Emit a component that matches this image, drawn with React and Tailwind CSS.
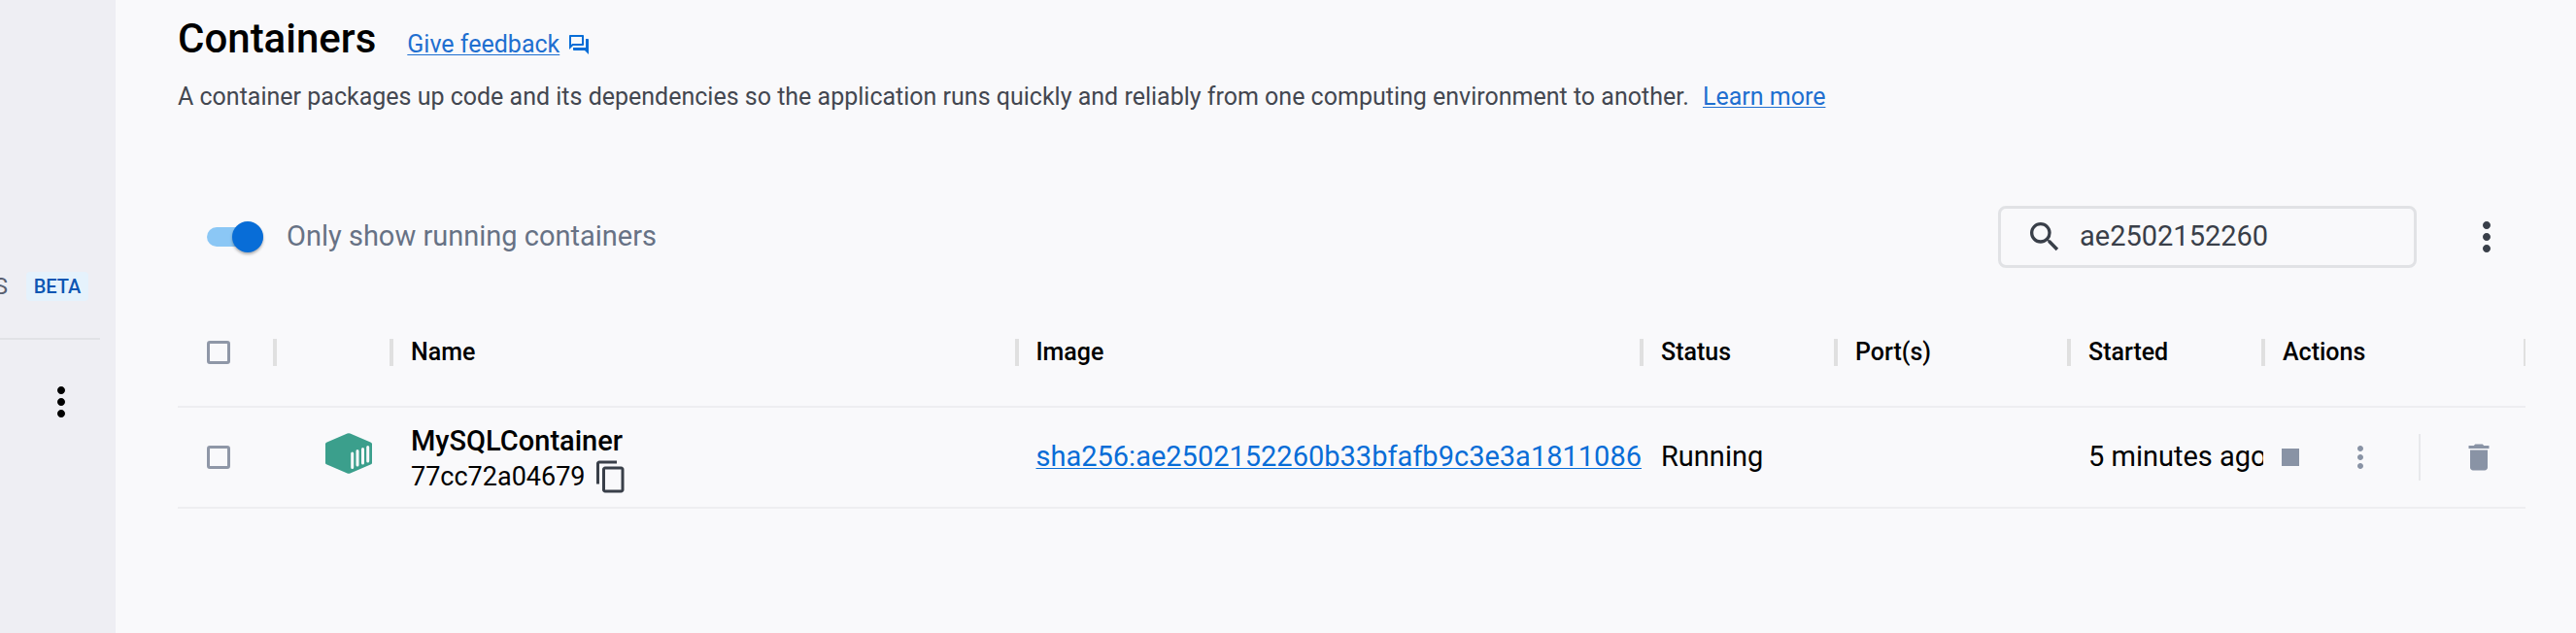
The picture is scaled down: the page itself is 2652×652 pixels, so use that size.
import { MdOutlineQuestionAnswer, MdMoreVert, MdSearch, MdContentCopy, MdStop, MdDelete } from 'react-icons/md';

const separator =
  'before:absolute before:right-[-2px] before:top-1/2 before:h-7 before:w-1 before:-translate-y-1/2 before:bg-[#e0e0e0]';
const lastSeparator =
  'before:absolute before:right-0 before:top-1/2 before:h-7 before:w-0.5 before:-translate-y-1/2 before:bg-[#e0e0e0]';

function HeaderCell({ children, label, last }) {
  return (
    <th aria-label={label} className={`relative px-5 text-left font-medium ${last ? lastSeparator : separator}`}>
      {children}
    </th>
  );
}

function Checkbox({ label }) {
  return (
    <input
      type="checkbox"
      aria-label={label}
      className="block size-6 appearance-none rounded-[3px] border-[3px] border-[#8f97a7] checked:bg-[#086dd7]"
    />
  );
}

function ContainerIcon() {
  return (
    <svg viewBox="0 0 48 42" className="mb-2 ml-[52px] h-[42px] w-12" aria-hidden="true">
      <path d="M22.5.5q1.500-.7 3 0l21.500 9.300q1 .5 1 1.500v19.400q0 1-1 1.500l-21.500 9.300q-1.500.7-3 0l-21.500-9.300q-1-.5-1-1.500v-19.400q0-1 1-1.500z" fill="#3b9f8c" />
      <path d="M27.700 21v14.500M33 18.500v14.500M38.500 16.500v14.500M43.700 14.500v14.500" stroke="#f9f9fb" strokeWidth="3" strokeLinecap="round" />
    </svg>
  );
}

function Sidebar() {
  return (
    <aside className="w-[119px] shrink-0 overflow-hidden bg-[#eeeef3] pt-[280px]">
      <div className="flex h-[30px] items-center gap-[19px]">
        <span className="flex w-2 justify-end text-2xl text-[#5a6070]">S</span>
        <span className="flex h-[30px] w-16 items-center justify-center rounded bg-[#e5f2fc] text-xl font-medium text-[#0d56b3]">BETA</span>
      </div>
      <hr className="mr-4 mt-[38px] border-t-2 border-[#e1e2e6]" />
      <button type="button" aria-label="Extension options" className="ml-[39px] mt-10 block">
        <MdMoreVert className="size-12 text-black" />
      </button>
    </aside>
  );
}

export default function App() {
  return (
    <div className="flex min-h-screen bg-[#f9f9fb] font-['Roboto',sans-serif] text-black">
      <Sidebar />
      <main className="min-w-0 flex-1 pl-16 pr-[52px] pt-4">
        <header>
          <div className="flex items-baseline gap-8">
            <h1 className="text-[42px] leading-[48px] font-medium">Containers</h1>
            <a href="#feedback" className="flex items-center gap-2 text-[25px] leading-8 text-[#1f6fd0]">
              <span className="underline decoration-1 underline-offset-2">Give feedback</span>
              <MdOutlineQuestionAnswer className="size-6 text-[#086dd7]" />
            </a>
          </div>
          <p className="mt-5 text-[25px] leading-8 text-[#434750]">
            A container packages up code and its dependencies so the application runs quickly and reliably from one computing environment to another.{' '}
            <a href="#learn" className="ml-2 text-[#1f6fd0] underline decoration-1 underline-offset-2">Learn more</a>
          </p>
        </header>

        <div className="mt-24 flex h-16 items-center pl-[30px]">
          <label className="flex flex-1 items-center gap-6 text-[29px] text-[#677285]">
            <span className="relative flex h-8 w-[58px] items-center">
              <input type="checkbox" role="switch" defaultChecked className="h-5 w-full appearance-none rounded-full bg-[#8bc7f5]" />
              <span className="pointer-events-none absolute right-0 size-8 rounded-full bg-[#086dd7] shadow-[0_2px_3px_rgba(0,0,0,0.3)]" />
            </span>
            Only show running containers
          </label>
          <label className="flex h-16 w-[431px] items-center gap-4 rounded-lg border-[3px] border-[#e1e2e5] px-[25px] text-[#393f49]">
            <MdSearch className="size-10 shrink-0" />
            <input type="text" aria-label="Search" defaultValue="ae2502152260" className="w-full min-w-0 bg-transparent text-[29px] outline-none" />
          </label>
          <button type="button" aria-label="Table options" className="ml-12 mr-4">
            <MdMoreVert className="size-12 text-[#393f49]" />
          </button>
        </div>

        <table className="mt-[31px] w-full table-fixed border-collapse">
          <colgroup>
            <col className="w-[100px]" />
            <col className="w-[120px]" />
            <col />
            <col />
            <col className="w-[200px]" />
            <col className="w-[240px]" />
            <col className="w-[200px]" />
            <col className="w-[270px]" />
          </colgroup>
          <thead>
            <tr className="h-28 border-b-2 border-[#eeeef1] text-[25px]">
              <th className={`relative pl-[30px] ${separator}`}><Checkbox label="Select all" /></th>
              <HeaderCell label="Icon" />
              <HeaderCell>Name</HeaderCell>
              <HeaderCell>Image</HeaderCell>
              <HeaderCell>Status</HeaderCell>
              <HeaderCell>Port(s)</HeaderCell>
              <HeaderCell>Started</HeaderCell>
              <HeaderCell last>Actions</HeaderCell>
            </tr>
          </thead>
          <tbody>
            <tr className="h-[104px] border-b-2 border-[#eeeef1] text-[29px]">
              <td className="pl-[30px]"><Checkbox label="Select MySQLContainer" /></td>
              <td><ContainerIcon /></td>
              <td className="px-5 pt-1">
                <div className="leading-9 font-medium">MySQLContainer</div>
                <div className="flex items-center gap-2 text-[27px] leading-[38px]">
                  77cc72a04679
                  <button type="button" aria-label="Copy ID"><MdContentCopy className="size-9 text-[#393f49]" /></button>
                </div>
              </td>
              <td className="overflow-hidden whitespace-nowrap pl-5">
                <a href="#image" className="text-[#086dd7] underline decoration-1 underline-offset-2">sha256:ae2502152260b33bfafb9c3e3a18110863</a>
              </td>
              <td className="px-5">Running</td>
              <td />
              <td className="overflow-hidden whitespace-nowrap pl-5">5 minutes ago</td>
              <td>
                <div className="flex items-center pl-[10px] text-[#8993a5]">
                  <button type="button" aria-label="Stop"><MdStop className="size-9" /></button>
                  <button type="button" aria-label="More actions" className="ml-9"><MdMoreVert className="size-9" /></button>
                  <span className="ml-[42px] h-12 w-0.5 bg-[#e8e9ec]" />
                  <button type="button" aria-label="Delete" className="ml-[42px]"><MdDelete className="size-9" /></button>
                </div>
              </td>
            </tr>
          </tbody>
        </table>
      </main>
    </div>
  );
}
